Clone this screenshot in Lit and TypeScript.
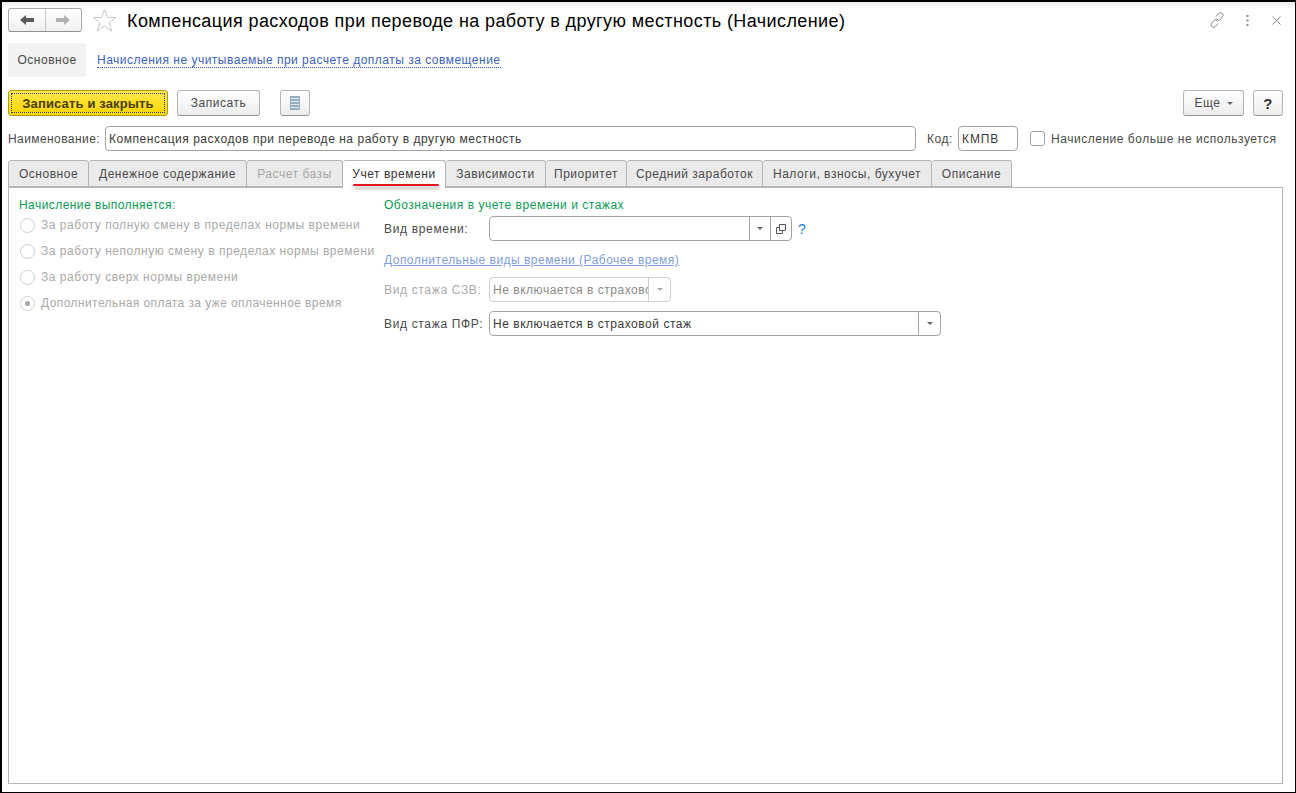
import { LitElement, html, css } from "lit";
import { customElement } from "lit/decorators.js";

const tabs = [
  { t: "Основное", w: 81 },
  { t: "Денежное содержание", w: 158 },
  { t: "Расчет базы", w: 96, dis: true },
  { t: "Учет времени", w: 103, active: true },
  { t: "Зависимости", w: 100 },
  { t: "Приоритет", w: 81 },
  { t: "Средний заработок", w: 136 },
  { t: "Налоги, взносы, бухучет", w: 169 },
  { t: "Описание", w: 80 },
];

const radios = [
  { t: "За работу полную смену в пределах нормы времени" },
  { t: "За работу неполную смену в пределах нормы времени" },
  { t: "За работу сверх нормы времени" },
  { t: "Дополнительная оплата за уже оплаченное время", on: true },
];

@customElement("app-root")
export class AppRoot extends LitElement {
  static styles = css`
    :host {
      display: block;
      width: 1296px;
      height: 793px;
      font-family: "Liberation Sans", Arial, sans-serif;
      font-size: 12px;
      letter-spacing: 0.53px;
      color: #4a4a4a;
    }
    .frame {
      box-sizing: border-box;
      width: 1296px;
      height: 793px;
      border: 1px solid #000;
      border-top-width: 2px;
      border-left-width: 2px;
      background: linear-gradient(#ececec 0, #fff 7px);
      padding: 6px 12px 8px 6px;
      display: flex;
      flex-direction: column;
    }
    .head { display: flex; align-items: center; height: 24px; }
    .nav {
      box-sizing: border-box;
      width: 74px;
      height: 24px;
      display: flex;
      border: 1px solid #a9a9a9;
      border-bottom-color: #8f8f8f;
      border-radius: 3px;
      background: linear-gradient(#fff, #efefef);
    }
    .nav span { flex: 1; display: flex; align-items: center; justify-content: center; }
    .nav span + span { border-left: 1px solid #c9c9c9; }
    .star { margin-left: 10px; width: 25px; height: 24px; }
    .title {
      margin-left: 10px;
      padding-top: 2px;
      font-size: 18px;
      letter-spacing: 0.4px;
      color: #000;
      white-space: nowrap;
      flex: 1;
    }
    .tools { display: flex; align-items: center; }
    .subnav { display: flex; align-items: center; margin-top: 11px; height: 34px; }
    .subtab {
      box-sizing: border-box;
      width: 78px;
      height: 34px;
      line-height: 34px;
      text-align: center;
      background: #f2f2f2;
      border-radius: 3px;
    }
    .sublink {
      margin-left: 11px;
      color: #3b62bd;
      letter-spacing: 0.495px;
      border-bottom: 1px dotted #2f55c8;
      line-height: 14px;
      padding-top: 1px;
    }
    .cmd { display: flex; align-items: center; margin-top: 13px; height: 26px; }
    .btn {
      box-sizing: border-box;
      height: 26px;
      display: flex;
      align-items: center;
      justify-content: center;
      border: 1px solid #b5b5b5;
      border-bottom-color: #949494;
      border-radius: 3px;
      background: linear-gradient(#fff, #ececec);
    }
    .primary {
      width: 160px;
      position: relative;
      font-weight: bold;
      font-size: 13px;
      letter-spacing: 0.15px;
      color: #4a3d00;
      border-color: #b39b10;
      background: linear-gradient(#ffe84d, #fbd400);
    }
    .primary::after {
      content: "";
      position: absolute;
      inset: 2px;
      border: 1px dotted #2a3fb0;
    }
    .save { width: 83px; margin-left: 9px; }
    .calc { width: 30px; margin-left: 20px; }
    .spacer { flex: 1; }
    .more { width: 61px; gap: 6px; }
    .help { width: 30px; margin-left: 9px; font-weight: bold; font-size: 15px; color: #333; }
    .caret { width: 0; height: 0; border: 3px solid transparent; border-top: 3px solid #666; border-bottom: 0; }
    .fields { display: flex; align-items: center; margin-top: 10px; height: 25px; }
    .input {
      box-sizing: border-box;
      height: 25px;
      display: flex;
      align-items: center;
      border: 1px solid #a3a3a3;
      border-radius: 4px;
      background: #fff;
      padding-left: 3px;
      color: #3a3a3a;
      white-space: nowrap;
      overflow: hidden;
    }
    .name-l { width: 97px; flex: none; white-space: nowrap; letter-spacing: 0.42px; }
    .name { width: 811px; }
    .kod-l { margin-left: 11px; width: 31px; flex: none; }
    .kod { width: 60px; letter-spacing: 0.9px; }
    .check {
      box-sizing: border-box;
      width: 15px;
      height: 15px;
      border: 1px solid #a3a3a3;
      border-radius: 3px;
      margin-left: 12px;
      margin-right: 6px;
    }
    .tabs { display: flex; margin-top: 9px; height: 27px; position: relative; z-index: 1; }
    .tab {
      box-sizing: border-box;
      height: 27px;
      line-height: 26px;
      text-align: center;
      border: 1px solid #b4b4b4;
      border-left-width: 0;
      border-radius: 3px 3px 0 0;
      background: #eaeaea;
      position: relative;
      white-space: nowrap;
    }
    .tab:first-child { border-left-width: 1px; }
    .tab.dis { color: #a6a6a6; }
    .tab.active { background: #fff; height: 28px; border-bottom: 0; color: #333; }
    .mark {
      position: absolute;
      left: 10px;
      right: 6px;
      top: 23px;
      height: 2px;
      background: #e8161b;
      border-radius: 1px;
      box-shadow: 1px 3px 3px rgba(0, 0, 0, 0.3);
    }
    .panel {
      box-sizing: border-box;
      flex: 1;
      width: 1275px;
      border: 1px solid #b4b4b4;
      padding: 10px 10px;
      display: flex;
    }
    .left { width: 365px; flex: none; }
    .green { color: #0a9a55; line-height: 14px; }
    .left .green { letter-spacing: 0.44px; }
    .radio {
      display: flex;
      align-items: center;
      height: 26px;
      color: #a9a9a9;
      white-space: nowrap;
    }
    .radio.on { letter-spacing: 0.42px; }
    .dot {
      box-sizing: border-box;
      width: 15px;
      height: 15px;
      border: 1px solid #cfcfcf;
      border-radius: 50%;
      margin: 0 6px 0 1px;
      display: flex;
      align-items: center;
      justify-content: center;
      flex: none;
    }
    .dot i { width: 5px; height: 5px; border-radius: 50%; background: #a8a8a8; }
    .form { display: flex; flex-direction: column; }
    .row { display: flex; align-items: center; height: 25px; white-space: nowrap; }
    .first { margin-top: 4px; }
    .lab { width: 105px; flex: none; letter-spacing: 0.66px; }
    .lab.dis { color: #a9a9a9; }
    .combo { padding-left: 0; }
    .val { flex: 1; min-width: 0; overflow: hidden; padding-left: 3px; }
    .seg {
      box-sizing: border-box;
      height: 100%;
      display: flex;
      align-items: center;
      justify-content: center;
      border-left: 1px solid #a3a3a3;
      flex: none;
    }
    .dis-combo { border-color: #d0d0d0; color: #8a8a8a; }
    .dis-combo .seg { border-left-color: #d0d0d0; }
    .dis-combo .caret { border-top-color: #aaa; }
    .q { color: #1f7fc4; font-size: 14px; margin-left: 6px; }
    .link2 { color: #7f9ddc; text-decoration: underline; line-height: 14px; margin-top: 12px; letter-spacing: 0.48px; }
    .szv { margin-top: 10px; }
    .pfr { margin-top: 9px; }
    .dots { margin-left: 20px; }
    .close { margin-left: 23px; margin-right: 2px; }
  `;

  render() {
    return html`
      <div class="frame">
        <div class="head">
          <div class="nav">
            <span>
              <svg width="16" height="12" viewBox="0 0 16 12"><path d="M1 6l6-5v3h8v4H7v3z" fill="#5a5a5a"/></svg>
            </span>
            <span>
              <svg width="16" height="12" viewBox="0 0 16 12"><path d="M15 6L9 1v3H1v4h8v3z" fill="#b0b0b0"/></svg>
            </span>
          </div>
          <svg class="star" viewBox="0 0 25 24">
            <path d="M12.500 1.500l3 8h8.500l-6.800 5.200 2.500 8.300-7.200-5-7.200 5 2.500-8.300L1 9.500h8.500z" fill="#fff" stroke="#c6c6c6"/>
          </svg>
          <div class="title">Компенсация расходов при переводе на работу в другую местность (Начисление)</div>
          <div class="tools">
            <svg width="18" height="18" viewBox="0 0 18 18" fill="none" stroke="#8c8c8c" stroke-width="1">
              <path d="M8 5.500l2.500-3a2.600 2.600 0 0 1 4 3.300l-3 3.300a2.600 2.600 0 0 1-3.800 0"/>
              <path d="M10 12.500l-2.500 3a2.600 2.600 0 0 1-4-3.300l3-3.300a2.600 2.600 0 0 1 3.800 0"/>
            </svg>
            <svg class="dots" width="3" height="11" viewBox="0 0 3 11" fill="#8a8a8a">
              <rect x="0.500" y="0" width="2" height="2"/><rect x="0.500" y="4.500" width="2" height="2"/><rect x="0.500" y="9" width="2" height="2"/>
            </svg>
            <svg class="close" width="9" height="9" viewBox="0 0 9 9" stroke="#8a8a8a" stroke-width="1">
              <path d="M.5.500l8 8M8.500.500l-8 8"/>
            </svg>
          </div>
        </div>
        <div class="subnav">
          <div class="subtab">Основное</div>
          <div class="sublink">Начисления не учитываемые при расчете доплаты за совмещение</div>
        </div>
        <div class="cmd">
          <div class="btn primary">Записать и закрыть</div>
          <div class="btn save">Записать</div>
          <div class="btn calc">
            <svg width="10" height="14" viewBox="0 0 10 14">
              <rect width="10" height="14" fill="#98adbf"/>
              <path d="M1 2.500h8M1 5.500h8M1 8.500h8M1 11.500h8" stroke="#e3eaf0" stroke-width="1"/>
            </svg>
          </div>
          <div class="spacer"></div>
          <div class="btn more">Еще <span class="caret"></span></div>
          <div class="btn help">?</div>
        </div>
        <div class="fields">
          <span class="name-l">Наименование:</span>
          <div class="input name">Компенсация расходов при переводе на работу в другую местность</div>
          <span class="kod-l">Код:</span>
          <div class="input kod">КМПВ</div>
          <div class="check"></div>
          <span>Начисление больше не используется</span>
        </div>
        <div class="tabs">
          ${tabs.map(
            (t) => html`<div
              class="tab ${t.dis ? "dis" : ""} ${t.active ? "active" : ""}"
              style="width:${t.w}px"
            >
              ${t.t}${t.active ? html`<div class="mark"></div>` : ""}
            </div>`
          )}
        </div>
        <div class="panel">
          <div class="left">
            <div class="green">Начисление выполняется:</div>
            <div>
              ${radios.map(
                (r) => html`<div class="radio ${r.on ? "on" : ""}">
                  <span class="dot">${r.on ? html`<i></i>` : ""}</span>${r.t}
                </div>`
              )}
            </div>
          </div>
          <div class="form">
            <div class="green">Обозначения в учете времени и стажах</div>
            <div class="row first">
              <span class="lab">Вид времени:</span>
              <div class="input combo" style="width:303px">
                <span class="val"></span>
                <span class="seg" style="width:21px"><span class="caret"></span></span>
                <span class="seg" style="width:21px">
                  <svg width="10" height="10" viewBox="0 0 10 10" fill="none" stroke="#555">
                    <path d="M3.500.500h6v6h-6z"/><path d="M3.500 3.500H.500v6h6V7"/>
                  </svg>
                </span>
              </div>
              <span class="q">?</span>
            </div>
            <div class="link2">Дополнительные виды времени (Рабочее время)</div>
            <div class="row szv">
              <span class="lab dis">Вид стажа СЗВ:</span>
              <div class="input combo dis-combo" style="width:182px">
                <span class="val">Не включается в страховой стаж</span>
                <span class="seg" style="width:22px"><span class="caret"></span></span>
              </div>
            </div>
            <div class="row pfr">
              <span class="lab">Вид стажа ПФР:</span>
              <div class="input combo" style="width:452px">
                <span class="val">Не включается в страховой стаж</span>
                <span class="seg" style="width:22px"><span class="caret"></span></span>
              </div>
            </div>
          </div>
        </div>
      </div>
    `;
  }
}
